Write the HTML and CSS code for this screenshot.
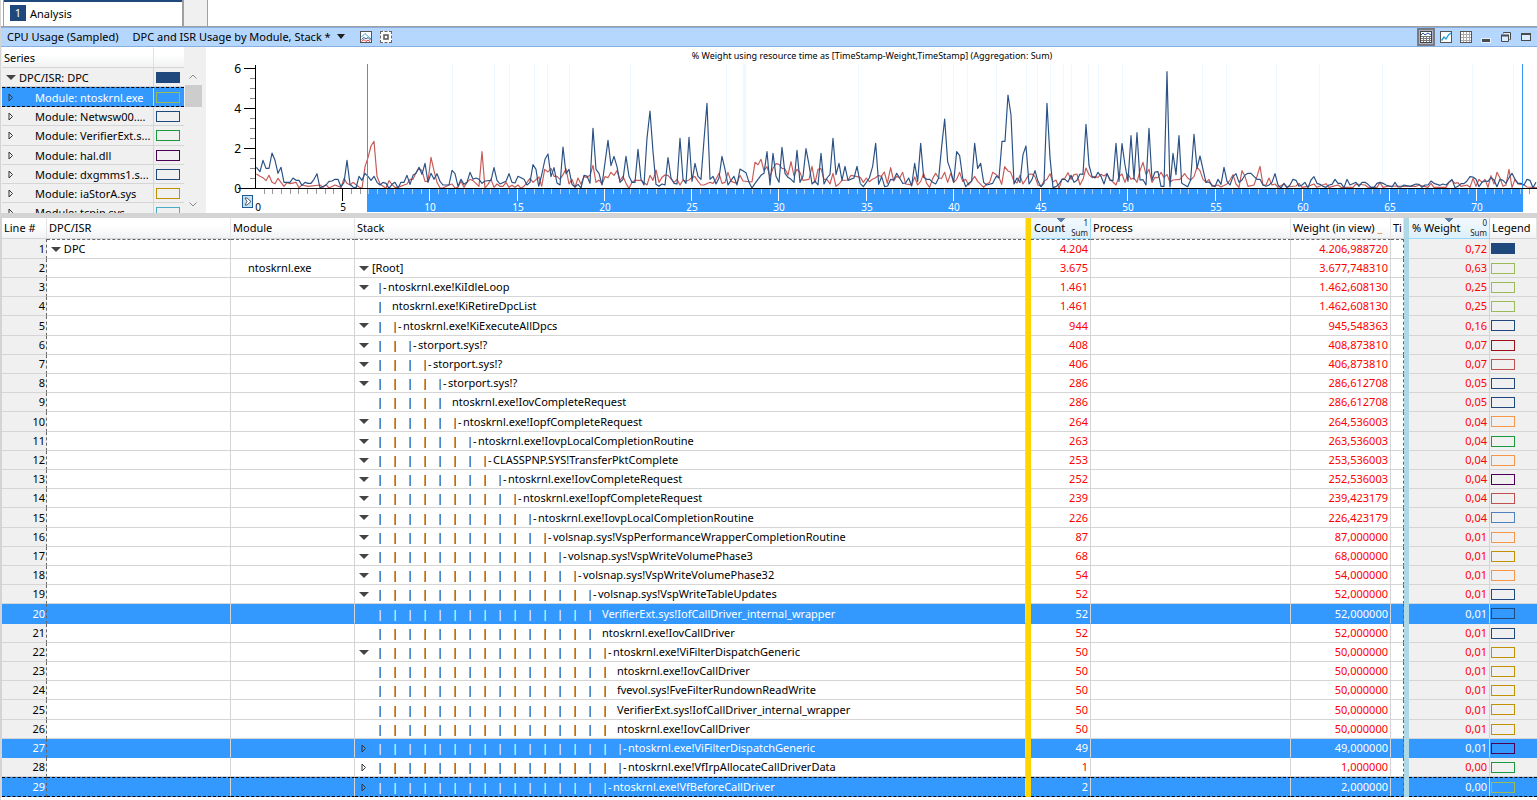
FILE: index.html
```html
<!DOCTYPE html>
<html lang="en">
<head>
<meta charset="utf-8">
<title>Analysis</title>
<link rel="stylesheet" href="styles.css">
</head>
<body>
<div class="app">
  <nav class="tabs">
    <button class="tab" type="button"><span class="tab-number">1</span>Analysis</button>
    <button class="tab-blank" type="button" aria-label="New tab"></button>
  </nav>

  <header class="titlebar">
    <span class="graph-name">CPU Usage (Sampled)</span>
    <button class="preset" type="button">DPC and ISR Usage by Module, Stack *
      <svg width="8" height="5" viewBox="0 0 8 5"><path d="M0 0h8L4 5z" fill="#1e1e1e"/></svg>
    </button>
    <button class="icon" type="button" aria-label="Graph style">
      <svg width="12" height="12" viewBox="0 0 12 12"><rect x=".5" y=".5" width="11" height="11" fill="#fff" stroke="#555"/><path d="M1.500 6L5 2.500 11 8" fill="none" stroke="#35a8dc"/><path d="M1.500 8.500L4 6.500 6 8 8 6.500 11 9.500" fill="none" stroke="#2c5aa0"/><path d="M1.500 10.500L4 8.500 6 10.500 8 9 10 10.500" fill="none" stroke="#e03030"/></svg>
    </button>
    <button class="icon" type="button" aria-label="Select all">
      <svg width="12" height="12" viewBox="0 0 12 12"><rect width="12" height="12" fill="#fff"/><path d="M0 .5h3M4.500 .5h3M9 .5h3M0 11.500h3M4.500 11.500h3M9 11.500h3M.5 0v3M.5 4.500v3M.5 9v3M11.500 0v3M11.500 4.500v3M11.500 9v3" stroke="#666"/><rect x="4" y="4" width="4" height="4" fill="#fff" stroke="#555" stroke-width="1.500"/></svg>
    </button>
    <span class="spacer"></span>
    <button class="icon pressed" type="button" aria-label="Graph and table">
      <svg width="12" height="12" viewBox="0 0 12 12"><rect x=".5" y=".5" width="11" height="11" fill="#fff" stroke="#444"/><path d="M1 5.500h10M1 7.500h10M1 9.500h10M3.500 5v6M6.500 5v6M9.500 5v6" stroke="#777"/><path d="M1 4l2-2 2 2 3-2 3 2" fill="none" stroke="#2850a8"/></svg>
    </button>
    <button class="icon" type="button" aria-label="Graph only">
      <svg width="12" height="12" viewBox="0 0 12 12"><rect x=".5" y=".5" width="11" height="11" fill="#fff" stroke="#555"/><path d="M1.500 9.500L4 6l2 2 2.500-4L11 2" fill="none" stroke="#1f9cd8" stroke-width="1.300"/></svg>
    </button>
    <button class="icon" type="button" aria-label="Table only">
      <svg width="12" height="12" viewBox="0 0 12 12"><rect x=".5" y=".5" width="11" height="11" fill="#fff" stroke="#555"/><path d="M1 3.500h10M1 6.500h10M1 9.500h10M3.500 1v10M6.500 1v10M9.500 1v10" stroke="#aaa"/></svg>
    </button>
    <button class="icon" type="button" aria-label="Minimize">
      <svg width="12" height="12" viewBox="0 0 12 12"><rect x="1" y="7" width="10" height="5" fill="#fff" opacity=".6"/><rect x="2" y="8" width="8" height="3" fill="#4a4a4a"/></svg>
    </button>
    <button class="icon" type="button" aria-label="Restore">
      <svg width="12" height="12" viewBox="0 0 12 12"><path d="M3 1h8v8H9V4H3z" fill="#dcecff"/><path d="M3.500 2.500v-1h7v7h-1" fill="none" stroke="#4a4a4a"/><path d="M1.500 4v6.500h7V4" fill="#dcecff" stroke="#4a4a4a"/><path d="M1 4.500h8" stroke="#4a4a4a" stroke-width="2"/></svg>
    </button>
    <button class="icon" type="button" aria-label="Maximize">
      <svg width="12" height="12" viewBox="0 0 12 12"><rect x="1.500" y="2.500" width="9" height="7" fill="#dcecff" stroke="#4a4a4a"/><path d="M1 3h10" stroke="#4a4a4a" stroke-width="2"/></svg>
    </button>
  </header>

  <section class="graph">
    <div class="series">
      <div class="series-head"><span>Series</span></div>
      <ul class="series-list" id="series"></ul>
    </div>
    <div class="scrollbar">
      <svg width="8" height="5" viewBox="0 0 8 5"><path d="M.5 4.500L4 1l3.500 3.500" fill="none" stroke="#8a8a8a"/></svg>
      <span class="thumb"></span>
      <svg width="8" height="5" viewBox="0 0 8 5"><path d="M.5 .5L4 4 7.500 .5" fill="none" stroke="#8a8a8a"/></svg>
    </div>
    <svg class="chart" viewBox="0 0 1331 166" preserveAspectRatio="xMinYMin meet" role="img" aria-label="DPC and ISR usage over time">
      <text class="chart-title" x="666" y="12">% Weight using resource time as [TimeStamp-Weight,TimeStamp] (Aggregation: Sum)</text>
      <g id="bands"></g>
      <g transform="translate(14 3) scale(.33333)" fill="none" stroke-width="3.500" stroke-linejoin="round">
        <g stroke="#c75a57">
          <polyline transform="translate(1)" points="108,372 119,379 128,383 137,392 146,376 155,397 164,401 173,385 182,397 191,409 200,398 209,401 227,397 236,413 245,405 263,409 299,405 308,412 317,404 326,414 344,405 362,412 371,385 380,400 389,405 398,397 407,404 416,411 425,415 434,350 443,323 452,288 461,274 470,379 479,402 497,415 506,392 515,403 524,412 533,412 551,405 560,402 569,388 578,388 587,368 596,355 605,362 614,394 623,394 632,322 641,362 650,397 659,414 668,414 686,405 695,402 704,414 713,412 722,394 731,412 740,397 749,388 758,392 776,409 785,305 794,414 803,403 812,388 821,412 830,402 839,409 848,409 857,397 866,412 875,406 884,412 893,405 902,415 911,409 920,397 929,385 938,397 956,381 964,409"/>
          <polyline transform="translate(960)" points="5,409 14,358 24,366 33,355 42,379 51,379 60,388 69,374 78,356 87,402 96,388 105,412 114,384 123,403 132,380 141,382 150,376 159,346 168,397 177,390 186,402 195,380 204,383 213,367 222,376 231,362 240,391 249,379 258,400 267,415 276,397 285,391 303,391 321,405 330,376 339,391 348,360 357,397 366,382 375,375 384,376 402,397 411,388 420,405 429,390 438,394 447,390 456,382 465,380 474,394 483,405 492,405 510,397 519,400 528,388 537,370 546,400 555,397 564,367 573,394 582,397 591,400 600,376 609,393 636,396 645,337 654,344 663,328 672,362 681,350 690,380 699,355 708,341 717,343 726,355 735,357 744,375 753,335 762,378 771,358 780,367 789,391 807,388 816,349 825,399 834,358 843,356 852,388 861,388 870,402 879,370 888,409 897,402 906,391 924,390 933,376 951,380 961,382"/>
          <polyline transform="translate(1921)" points="0,382 9,397 18,384 27,395 36,388 45,384 54,376 63,379 72,366 81,400 91,353 100,393 109,379 118,384 127,367 136,402 145,403 154,405 163,381 172,405 181,394 190,370 199,400 208,412 217,385 226,370 235,384 244,385 253,367 262,397 271,370 280,397 289,388 298,367 307,394 316,388 325,405 343,379 352,394 370,412 379,402 388,397 397,367 406,373 415,380 424,403 433,350 442,362 451,367 461,394 470,399 479,376 488,402 497,388 506,373 515,372 524,380 533,405 542,409 551,394 560,388 569,371 578,396 587,390 596,415 605,388 614,384 623,368 632,388 641,374 650,372 659,405 668,388 677,354 686,374 695,383 704,380 713,382 722,373 731,378 740,371 749,388 758,396 767,405 776,380 785,372 794,397 803,371 812,388 821,384 830,397 839,362 848,337 857,374 866,358 875,397 884,382 893,383 902,367 911,382 920,373 929,397 938,390 959,388"/>
          <polyline transform="translate(2880)" points="0,388 14,371 23,384 32,390 42,380 51,352 60,362 69,388 78,397 87,388 96,409 114,405 123,411 141,402 150,390 159,374 168,402 177,412 186,362 195,379 204,409 222,405 231,379 240,349 249,405 258,405 267,384 276,405 285,402 294,412 312,402 321,411 348,408 357,400 366,412 384,409 402,402 411,412 438,401 447,412 474,405 483,412 519,412 528,402 555,405 564,412 591,412 600,398 609,412 627,408 672,409 708,409 717,405 744,412 753,400 762,412 798,412 807,397 816,391 825,400 834,398 843,409 861,405 870,412 879,385 888,409 897,388 906,397 915,388 924,412 933,377 942,402 951,367 960,384 969,409 978,405 987,358 996,412 1005,388 1014,402 1032,405 1041,411 1071,413"/>
        </g>
        <g stroke="#2a5184">
          <polyline transform="translate(1)" points="108,352 119,365 128,331 137,355 146,355 155,309 164,331 173,370 182,352 191,397 209,397 218,384 227,391 236,391 245,406 254,397 263,400 272,400 281,388 290,371 299,414 317,405 326,394 335,393 344,388 353,388 362,411 371,397 380,331 389,403 398,411 407,414 416,379 425,391 434,370 443,379 452,391 461,379 470,397 479,405 488,397 497,400 506,415 515,403 524,397 533,414 542,397 551,397 560,376 569,403 578,376 587,370 596,352 605,373 614,340 623,397 632,370 641,388 650,371 659,394 668,405 686,405 695,361 704,371 713,409 722,388 731,403 740,397 749,367 758,388 767,384 776,388 785,400 794,393 812,391 821,353 830,391 839,402 857,394 866,371 875,397 884,399 893,379 902,383 911,388 920,405 929,397 938,344 947,358 955,409"/>
          <polyline transform="translate(960)" points="-4,409 5,375 15,328 24,312 33,380 42,353 51,399 60,405 69,291 78,371 87,358 96,403 105,411 114,403 123,414 132,376 141,378 150,400 159,235 168,358 177,370 186,405 204,271 213,347 222,319 231,350 240,397 249,388 258,319 267,379 276,397 285,397 294,298 303,388 312,405 321,265 330,183 339,305 348,403 357,409 366,402 375,405 384,323 393,384 402,400 411,402 420,265 429,388 438,400 447,262 456,394 465,340 474,379 483,388 492,270 501,160 510,388 519,379 528,402 537,384 546,319 555,358 564,405 573,391 582,379 591,405 600,357 618,368 627,397 636,414 645,400 654,388 663,376 672,370 681,305 690,405 699,310 708,379 717,397 726,292 735,370 744,382 753,388 762,397 771,301 780,397 789,379 798,296 807,344 816,402 825,393 834,405 843,310 852,402 861,384 870,373 879,265 888,374 897,340 906,391 915,349 924,391 942,384 951,349 961,401"/>
          <polyline transform="translate(1921)" points="0,401 9,410 18,397 27,384 37,349 46,280 55,403 64,380 73,410 82,408 91,388 100,390 109,370 118,384 127,400 136,399 145,384 154,408 163,340 172,394 181,280 190,382 199,388 208,388 217,397 226,402 235,384 244,290 253,207 262,335 271,362 280,397 289,305 298,317 307,384 316,410 325,400 334,394 343,280 352,355 361,340 370,397 379,405 397,400 408,379 416,384 425,274 434,274 443,135 452,195 461,402 470,384 479,397 488,314 497,288 506,402 515,388 524,362 533,394 542,410 551,400 560,160 569,323 578,413 587,410 596,402 605,388 614,388 623,396 632,376 641,397 650,391 659,372 668,373 677,223 686,345 695,379 704,384 713,367 722,379 731,402 740,371 749,391 758,391 767,280 776,394 785,281 794,345 803,394 812,257 821,388 830,248 839,390 848,389 857,405 866,235 875,390 884,366 893,365 902,409 911,409 920,65 929,410 938,310 947,374 956,257 964,400"/>
          <polyline transform="translate(2880)" points="5,400 14,405 23,410 32,390 42,253 51,355 60,318 69,358 78,397 87,396 96,405 105,410 114,388 123,403 132,352 141,394 150,405 159,380 168,371 177,397 186,390 195,375 204,370 213,370 222,379 231,388 240,388 249,405 258,409 267,405 276,397 285,371 294,405 303,414 312,400 321,413 330,405 339,388 348,391 357,409 366,405 375,397 384,413 393,390 402,380 411,400 420,403 429,409 438,412 447,405 456,403 465,388 474,400 483,400 492,413 501,388 510,405 528,397 537,409 546,397 555,397 564,403 573,412 582,412 591,400 600,397 609,400 618,405 636,411 645,397 654,411 663,411 672,405 690,409 708,402 717,403 726,412 735,405 744,405 753,393 762,400 780,406 789,402 798,405 816,388 825,413 834,409 843,401 852,401 861,393 870,380 879,381 888,388 897,410 906,397 915,393 924,394 933,383 942,390 951,410 960,388 969,391 978,400 987,383 996,370 1005,388 1014,400 1023,400 1032,405 1041,388 1050,391 1059,413 1068,397"/>
        </g>
      </g>
      <rect x="161" y="142" width="1156" height="23" fill="#3399ff"/>
      <path d="M161.500 17v125M1316.500 17v125" stroke="#3399ff"/>
      <g id="axes"></g>
      <g transform="translate(36 148)"><rect x=".5" y=".5" width="10" height="12" fill="#c5e4fa" stroke="#1f5a94"/><path d="M3 3h2l4 3.500-4 3.500H3l2-3.500z" fill="#fff" stroke="#333" stroke-width=".8"/></g>
    </svg>
  </section>

  <table class="grid">
    <colgroup>
      <col class="c-line"><col class="c-dpc"><col class="c-module"><col class="c-stack"><col class="c-gold"><col class="c-count"><col class="c-process"><col class="c-weight"><col class="c-ti"><col class="c-blue"><col class="c-percent"><col class="c-legend">
    </colgroup>
    <thead>
      <tr>
        <th>Line #</th><th>DPC/ISR</th><th>Module</th><th>Stack</th><th class="gold"></th>
        <th class="sorted"><div class="sort-head">Count<span class="agg"><span>1</span><span>Sum</span></span></div></th>
        <th>Process</th>
        <th>Weight (in view) <span class="more">_</span></th><th>Ti</th><th class="blue"></th>
        <th class="sorted"><div class="sort-head">% Weight<span class="agg"><span>0</span><span>Sum</span></span></div></th>
        <th>Legend</th>
      </tr>
    </thead>
    <tbody id="rows"></tbody>
  </table>
</div>
<script src="app.js"></script>
</body>
</html>
```
FILE: styles.css
```css
* { box-sizing: border-box; }
body {
  margin: 0;
  background: #fff;
  color: #000;
  font: 11px/19px "Noto Sans", "Open Sans", sans-serif;
}
button { margin: 0; padding: 0; border: 0; background: none; color: inherit; font: inherit; }
.app { height: 100vh; overflow: hidden; border-left: 1px solid #d4d4d4; }

.tabs { display: flex; height: 26px; padding-left: 2px; }
.tab {
  display: flex; align-items: center; gap: 4px;
  width: 181px; padding-left: 6px;
  border: solid #a0a0a0; border-width: 0 2px 0 1px;
  box-shadow: inset 0 2px #1f497d;
}
.tab-number { width: 16px; line-height: 16px; background: #1f497d; color: #fff; text-align: center; }
.tab-blank { width: 24px; background: #f0f0f0; border-right: 1px solid #a0a0a0; }

.titlebar {
  display: flex; align-items: center; gap: 8px;
  height: 21px; padding: 0 5px 0 6px;
  background: #b5d6fd;
  border-top: 1px solid #a0a0a0; border-bottom: 1px solid #86aee0;
  box-shadow: inset 0 1px #86aee0;
}
.preset { display: flex; align-items: center; gap: 6px; margin: 0 7px 0 6px; }
.icon { display: flex; align-items: center; justify-content: center; width: 12px; height: 18px; }
.pressed { width: 18px; margin-right: -3px; background: #a9b4c8; border: 2px solid #7a7a82; }
.spacer { flex: 1; }

.graph { display: flex; height: 166px; background: #f0f0f0; }
.series { display: flex; flex-direction: column; width: 183px; padding-left: 1px; }
.series-head {
  height: 21px; padding: 1px 0 0 2px;
  background: linear-gradient(#fff 40%, #f1f2f4);
  border-bottom: 1px solid #d5d5d5;
}
.series-head span { display: block; width: 150px; border-right: 1px solid #e2e2e2; }
.series-list { flex: 1; min-height: 0; margin: 0; padding: 0; overflow: hidden; list-style: none; }
.series-item { display: grid; grid-template-columns: 17px 135px 30px; height: 19px; border-bottom: 1px solid #d5d5d5; line-height: 19px; }
.series-item:nth-child(4) { height: 20px; }
.series-item .toggle { width: auto; }
.series-item .label { padding-left: 16px; white-space: nowrap; border-right: 1px solid #d5d5d5; overflow: hidden; }
.series-item.parent .label { padding-left: 0; }
.series-item.selected { background: #3399ff; color: #fff; border-top: 1px dashed #000; border-bottom: 1px dashed #000; height: 20px; }
.series-item .swatch { margin: 4px 0 0 2px; }

.toggle { display: inline-flex; align-items: center; justify-content: center; width: 10px; height: 18px; vertical-align: top; }
.swatch { display: block; width: 24px; height: 11px; border: 1px solid; }

.scrollbar { display: flex; flex-direction: column; align-items: center; width: 22px; padding: 27px 4px 6px 0; }
.thumb { width: 17px; height: 22px; margin: 6px 0 auto; background: #cdcdcd; }

.chart { display: block; flex: 1; min-width: 0; height: 166px; background: #fff; }
.chart-title { font-size: 9px; text-anchor: middle; }
.axis-y { font-size: 12px; text-anchor: end; }
.axis-x { font-size: 10px; text-anchor: middle; }
.on-range { fill: #fff; }

.grid { width: 100%; table-layout: fixed; border-collapse: separate; border-spacing: 0; border-top: 5px solid #d4d4d4; border-left: 1px solid #d4d4d4; }
.c-line { width: 45px; }
.c-dpc { width: 184px; }
.c-module { width: 124px; }
.c-gold, .c-blue { width: 5px; }
.c-count { width: 60px; }
.c-process { width: 200px; }
.c-weight { width: 100px; }
.c-ti { width: 13px; }
.c-percent { width: 81px; }
.c-legend { width: 47px; }
.grid th {
  height: 21px; padding: 0 0 0 2px; line-height: 20px;
  background: linear-gradient(#fff 40%, #f1f2f4);
  border-bottom: 1px solid #d5d5d5; border-right: 1px solid #e4e4e4;
  text-align: left; font-weight: 400; white-space: nowrap; overflow: hidden;
}
.grid th.gold, .grid .gold { padding: 0; background: #ffd400; border: 0; }
.grid th.blue, .grid .blue { padding: 0; background: #add8e6; border: 0; }
.grid th.sorted {
  padding-left: 3px;
  background:
    conic-gradient(from -45deg at 50% 4px, #5a7faf 90deg, transparent 0) 50% 0 / 8px 4px no-repeat,
    linear-gradient(#f4fafe, #dceffa);
  border-right: 1px solid #96d9f9; border-bottom: 1px solid #96d9f9;
}
.sort-head { display: flex; justify-content: space-between; }
.agg { display: flex; flex-direction: column; padding-right: 2px; color: #222; font-size: 8px; line-height: 10px; text-align: right; }
.more { color: #e08a1e; }

.grid td { height: 19px; padding: 0 2px 0 4px; border-right: 1px solid #d5d5d5; border-bottom: 1px solid #d5d5d5; line-height: 18px; white-space: nowrap; overflow: hidden; }
.grid tr:nth-child(5n) td { height: 20px; }
.grid td.line { padding-right: 1px; background: #f0f0f0; border-right: 1px dashed #666; text-align: right; }
.grid td.num { color: #f00; text-align: right; }
.grid td.ti { border-right: 1px dashed #666; }
.grid td.pct, .grid td.legend { background: #f0f0f0; }
.grid td.legend { padding: 0 0 0 1px; border-right: 0; }
.grid td.module { padding-left: 17px; }
.grid tbody tr:first-child td:not(.gold):not(.blue):not(.pct):not(.legend):not(.line) { border-top: 1px dashed #666; }
.grid tbody tr.selected td:not(.gold):not(.blue) { background: #3399ff; border-bottom-color: #3399ff; color: #fff; }
.grid tbody tr.focused td:not(.gold):not(.blue) { border-top: 1px dashed #000; border-bottom: 1px dashed #000; }
.stack .toggle { margin-right: 3px; }
.tree { display: inline-block; padding-left: 5px; }
.guide { display: inline-block; width: 15px; font-weight: 500; }
.branch { display: inline-block; width: 11px; }
```
FILE: app.js
```js
const open = '<svg width="10" height="5" viewBox="0 0 10 5"><path d="M0 0h10L5 5z" fill="#444"/></svg>';
const shut = '<svg width="6" height="9" viewBox="0 0 6 9"><path d="M1 1v7l3.500-3.500z" fill="none" stroke="#333"/></svg>';
const toggle = (state) => state
  ? `<button class="toggle" type="button" aria-label="Toggle">${state === 'o' ? open : shut}</button>`
  : '<span class="toggle"></span>';
const swatch = (color, filled) =>
  `<span class="swatch" style="color:${color}${filled ? ';background:' + color : ''}"></span>`;

const navy = '#1f497d', lime = '#9bbb59', green = '#189a3c', plum = '#4b0055', gold = '#c09100',
  orange = '#f79646', red = '#c0504d', maroon = '#9c1018', blue = '#4f81bd', teal = '#4bacc6';

const series = [
  ['DPC/ISR: DPC', navy], ['Module: ntoskrnl.exe', lime], ['Module: Netwsw00....', navy],
  ['Module: VerifierExt.s...', green], ['Module: hal.dll', plum], ['Module: dxgmms1.s...', navy],
  ['Module: iaStorA.sys', gold], ['Module: tcpip.sys', teal],
];
document.getElementById('series').innerHTML = series.map(([name, color], i) =>
  `<li class="series-item ${i === 0 ? 'parent' : i === 1 ? 'selected' : ''}">${toggle(i ? 'c' : 'o')}<span class="label">${name}</span>${swatch(color, !i)}</li>`).join('');

/* toggle state, guide count, has branch, name, count, weight, percent, colour */
const rows = [
  ['', 0, 0, '', '4.204', '4.206,988720', '0,72', navy],
  ['o', -1, 0, '[Root]', '3.675', '3.677,748310', '0,63', lime],
  ['o', 0, 1, 'ntoskrnl.exe!KiIdleLoop', '1.461', '1.462,608130', '0,25', lime],
  ['', 1, 0, 'ntoskrnl.exe!KiRetireDpcList', '1.461', '1.462,608130', '0,25', lime],
  ['o', 1, 1, 'ntoskrnl.exe!KiExecuteAllDpcs', '944', '945,548363', '0,16', navy],
  ['o', 2, 1, 'storport.sys!?', '408', '408,873810', '0,07', maroon],
  ['o', 3, 1, 'storport.sys!?', '406', '406,873810', '0,07', red],
  ['o', 4, 1, 'storport.sys!?', '286', '286,612708', '0,05', navy],
  ['', 5, 0, 'ntoskrnl.exe!IovCompleteRequest', '286', '286,612708', '0,05', navy],
  ['o', 5, 1, 'ntoskrnl.exe!IopfCompleteRequest', '264', '264,536003', '0,04', orange],
  ['o', 6, 1, 'ntoskrnl.exe!IovpLocalCompletionRoutine', '263', '263,536003', '0,04', green],
  ['o', 7, 1, 'CLASSPNP.SYS!TransferPktComplete', '253', '253,536003', '0,04', orange],
  ['o', 8, 1, 'ntoskrnl.exe!IovCompleteRequest', '252', '252,536003', '0,04', plum],
  ['o', 9, 1, 'ntoskrnl.exe!IopfCompleteRequest', '239', '239,423179', '0,04', red],
  ['o', 10, 1, 'ntoskrnl.exe!IovpLocalCompletionRoutine', '226', '226,423179', '0,04', blue],
  ['o', 11, 1, 'volsnap.sys!VspPerformanceWrapperCompletionRoutine', '87', '87,000000', '0,01', orange],
  ['o', 12, 1, 'volsnap.sys!VspWriteVolumePhase3', '68', '68,000000', '0,01', gold],
  ['o', 13, 1, 'volsnap.sys!VspWriteVolumePhase32', '54', '54,000000', '0,01', orange],
  ['o', 14, 1, 'volsnap.sys!VspWriteTableUpdates', '52', '52,000000', '0,01', navy],
  ['', 15, 0, 'VerifierExt.sys!IofCallDriver_internal_wrapper', '52', '52,000000', '0,01', navy],
  ['', 15, 0, 'ntoskrnl.exe!IovCallDriver', '52', '52,000000', '0,01', navy],
  ['o', 15, 1, 'ntoskrnl.exe!ViFilterDispatchGeneric', '50', '50,000000', '0,01', gold],
  ['', 16, 0, 'ntoskrnl.exe!IovCallDriver', '50', '50,000000', '0,01', gold],
  ['', 16, 0, 'fvevol.sys!FveFilterRundownReadWrite', '50', '50,000000', '0,01', gold],
  ['', 16, 0, 'VerifierExt.sys!IofCallDriver_internal_wrapper', '50', '50,000000', '0,01', gold],
  ['', 16, 0, 'ntoskrnl.exe!IovCallDriver', '50', '50,000000', '0,01', gold],
  ['c', 16, 1, 'ntoskrnl.exe!ViFilterDispatchGeneric', '49', '49,000000', '0,01', plum],
  ['c', 16, 1, 'ntoskrnl.exe!VfIrpAllocateCallDriverData', '1', '1,000000', '0,00', green],
  ['c', 15, 1, 'ntoskrnl.exe!VfBeforeCallDriver', '2', '2,000000', '0,00', lime],
];
const selected = [20, 27, 29];

const stack = ([state, depth, branch, name]) => {
  if (!name) return '';
  if (depth < 0) return toggle(state) + name;
  return `${toggle(state)}<span class="tree">${'<span class="guide">|</span>'.repeat(depth)}${branch ? '<span class="branch">|-</span>' : ''}${name}</span>`;
};
document.getElementById('rows').innerHTML = rows.map((r, i) => {
  const n = i + 1;
  const state = (selected.includes(n) ? 'selected' : '') + (n === 29 ? ' focused' : '');
  return `<tr class="${state}"><td class="line">${n}</td><td>${i ? '' : toggle('o') + ' DPC'}</td>` +
    `<td class="module">${i === 1 ? 'ntoskrnl.exe' : ''}</td><td class="stack">${stack(r)}</td><td class="gold"></td>` +
    `<td class="num">${r[4]}</td><td></td><td class="num">${r[5]}</td><td class="ti"></td><td class="blue"></td>` +
    `<td class="num pct">${r[6]}</td><td class="legend">${swatch(r[7], !i)}</td></tr>`;
}).join('');

/* Faint vertical bands behind the curves */
const bands = [246, 288, 303, 328, 341, 363, 424, 520, 652, 735, 747, 761, 790, 820, 831, 844, 857, 865, 882, 892, 916, 996, 1020, 1070, 1113, 1176, 1223, 1266, 1307];
document.getElementById('bands').innerHTML = bands.map((x) => `<path d="M${x}.5 17v124" stroke="#eff7ff"/>`).join('') +
  '<path d="M538.500 17v124" stroke="#eff7ff" stroke-width="3"/>';

/* Axis lines, ticks and labels */
let axes = '<path d="M49.500 18v124M32 141.500h1299" stroke="#000"/>';
for (let i = 0; i <= 12; i++) {
  const y = 141.5 - i * 10;
  const major = i % 4 === 0;
  axes += `<path d="M${major ? 38 : 44} ${y}H49" stroke="${major ? '#000' : '#888'}"/>`;
  if (major) axes += `<text class="axis-y" x="35" y="${y + 4}">${i / 2}</text>`;
}
for (let i = 1; i < 147; i++) {
  const x = Math.floor(49.3 + i * 8.725) + 0.5;
  const inside = x > 161 && x < 1317;
  const major = i % 10 === 0;
  const color = major ? (inside ? '#fff' : '#000') : (inside ? '#a9d3ff' : '#999');
  axes += `<path d="M${x} 142v${major ? 12 : 5}" stroke="${color}"/>`;
  if (major) axes += `<text class="axis-x ${inside ? 'on-range' : ''}" x="${x + 0.5}" y="164">${i / 2}</text>`;
}
axes += '<text class="axis-x" x="52" y="164">0</text>';
document.getElementById('axes').innerHTML = axes;
```
